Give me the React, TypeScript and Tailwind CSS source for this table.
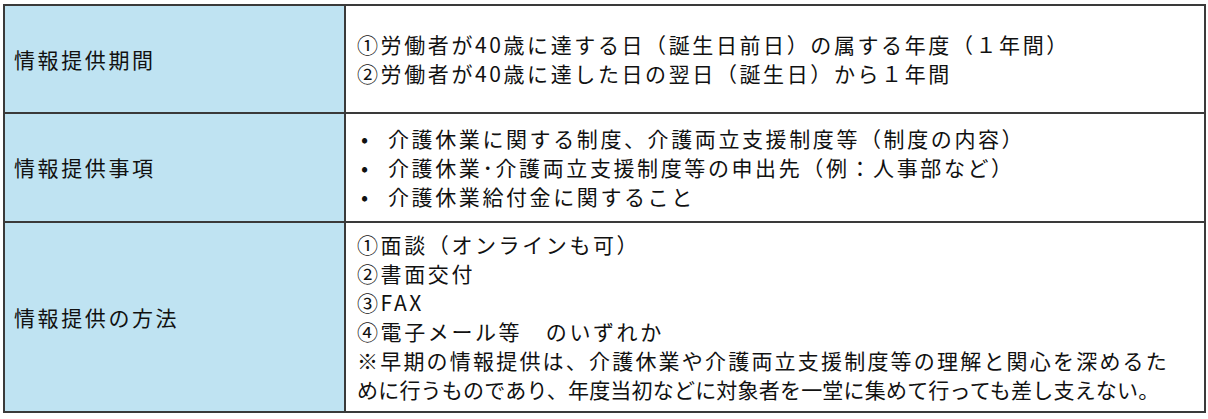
const rows = [
  {
    head: '情報提供期間',
    h: 'h-[108px]',
    body: (
      <div>
        <p>①労働者が40歳に達する日（誕生日前日）の属する年度（１年間）</p>
        <p>②労働者が40歳に達した日の翌日（誕生日）から１年間</p>
      </div>
    ),
  },
  {
    head: '情報提供事項',
    h: 'h-[109px]',
    body: (
      <ul>
        {[
          '介護休業に関する制度、介護両立支援制度等（制度の内容）',
          '介護休業･介護両立支援制度等の申出先（例：人事部など）',
          '介護休業給付金に関すること',
        ].map((t) => (
          <li key={t} className="flex">
            <span className="w-[31px] shrink-0 pl-[4px]">•</span>
            <span>{t}</span>
          </li>
        ))}
      </ul>
    ),
  },
  {
    head: '情報提供の方法',
    h: 'h-[190px]',
    body: (
      <div className="whitespace-nowrap">
        <p>①面談（オンラインも可）</p>
        <p>②書面交付</p>
        <p>③FAX</p>
        <p>④電子メール等　のいずれか</p>
        <p className="tracking-[2.2px]">※早期の情報提供は、介護休業や介護両立支援制度等の理解と関心を深めるた</p>
        <p className="tracking-[0.2px]">めに行うものであり、年度当初などに対象者を一堂に集めて行っても差し支えない。</p>
      </div>
    ),
  },
]

export default function App() {
  return (
    <div className="w-[1208px] h-[419px] bg-white pt-[4px] pl-[3px] font-['Noto_Sans_CJK_JP',sans-serif] text-[#111]">
      <table className="w-[1203px] border-collapse border-2 border-[#3a3a3a] text-[21px] leading-[29px] tracking-[2.6px]">
        <tbody>
          {rows.map((r) => (
            <tr key={r.head} className={r.h}>
              <td className="w-[341px] border-2 border-[#3a3a3a] bg-[#bfe3f2] pl-[9px] align-middle">
                {r.head}
              </td>
              <td className="border-2 border-[#3a3a3a] bg-white pl-[11px] pr-[8px] align-middle">
                {r.body}
              </td>
            </tr>
          ))}
        </tbody>
      </table>
    </div>
  )
}
